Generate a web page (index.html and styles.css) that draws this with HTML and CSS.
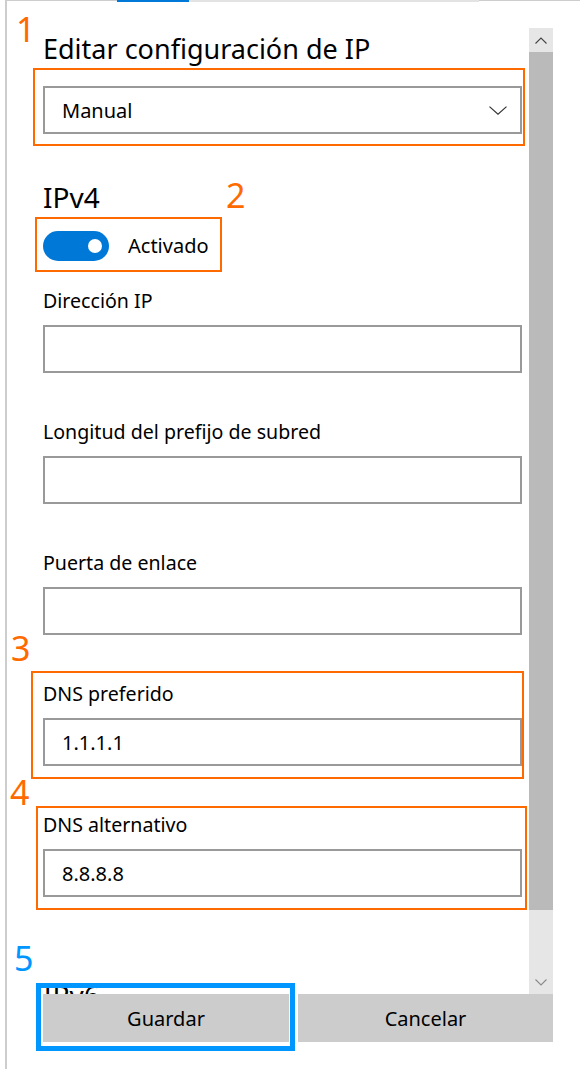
FILE: index.html
```html
<!DOCTYPE html>
<html lang="es">
<head>
<meta charset="utf-8">
<title>Editar configuración de IP</title>
<link rel="stylesheet" href="styles.css">
</head>
<body>
<div class="page">
  <div class="frame">
    <div class="tabs">
      <span class="seg seg-a"></span>
      <span class="seg seg-active"></span>
      <span class="seg seg-light"></span>
      <span class="seg seg-b"></span>
    </div>
    <div class="main">
      <div class="content">
        <h1 class="title">Editar configuración de IP</h1>
        <div class="select">
          <span>Manual</span>
          <svg class="chev" width="18" height="9" viewBox="0 0 18 9"><polyline points="0.5,0.6 9,8.2 17.5,0.6" fill="none" stroke="#333" stroke-width="1.2"/></svg>
        </div>
        <h2 class="section">IPv4</h2>
        <div class="toggle-row">
          <span class="toggle"><span class="knob"></span></span>
          <span class="toggle-label">Activado</span>
        </div>
        <div class="field first">
          <div class="label">Dirección IP</div>
          <div class="input"></div>
        </div>
        <div class="field">
          <div class="label">Longitud del prefijo de subred</div>
          <div class="input"></div>
        </div>
        <div class="field">
          <div class="label">Puerta de enlace</div>
          <div class="input"></div>
        </div>
        <div class="field">
          <div class="label">DNS preferido</div>
          <div class="input">1.1.1.1</div>
        </div>
        <div class="field">
          <div class="label">DNS alternativo</div>
          <div class="input">8.8.8.8</div>
        </div>
        <h2 class="section ipv6">IPv6</h2>
      </div>
      <div class="scrollbar">
        <div class="sb-btn">
          <svg width="12" height="7" viewBox="0 0 12 7"><polyline points="0.5,6.5 6,1 11.5,6.5" fill="none" stroke="#444" stroke-width="1.1"/></svg>
        </div>
        <div class="sb-thumb"></div>
        <div class="sb-track">
          <div class="sb-btn">
            <svg width="12" height="7" viewBox="0 0 12 7"><polyline points="0.5,0.5 6,6 11.5,0.5" fill="none" stroke="#8a8a8a" stroke-width="1.1"/></svg>
          </div>
        </div>
      </div>
    </div>
    <div class="actions">
      <button class="btn btn-save">Guardar</button>
      <button class="btn btn-cancel">Cancelar</button>
    </div>
  </div>

  <div class="ann-box box1"></div>
  <div class="ann-box box2"></div>
  <div class="ann-box box3"></div>
  <div class="ann-box box4"></div>
  <div class="focus-box"></div>

  <span class="ann-num n1">1</span>
  <span class="ann-num n2">2</span>
  <span class="ann-num n3">3</span>
  <span class="ann-num n4">4</span>
  <span class="ann-num n5">5</span>
</div>
</body>
</html>
```

FILE: styles.css
```css
* { box-sizing: border-box; }

body {
  margin: 0;
  background: #fff;
  color: #000;
  font-family: "Noto Sans", "Open Sans", sans-serif;
}

.page {
  position: relative;
  width: 580px;
  height: 1069px;
  overflow: hidden;
}

.frame {
  margin-left: 5px;
  height: 1069px;
  border-left: 2px solid #cdcdcd;
}

.tabs {
  display: flex;
  align-items: flex-start;
  height: 2px;
}
.seg { display: block; }
.seg-a { width: 110px; height: 1px; background: #cdcdcd; }
.seg-active { width: 72px; height: 2px; background: #0078d7; }
.seg-light { width: 290px; height: 2px; background: #e3e3e3; }
.seg-b { flex: 1; height: 1px; background: #cdcdcd; }

.main {
  display: flex;
  margin-top: 26px;
  height: 966px;
  padding-right: 27px;
}

.content {
  flex: 1;
  overflow: hidden;
  padding: 3px 7px 0 36px;
}

.title {
  margin: 0;
  font-size: 27px;
  font-weight: 400;
  line-height: 36px;
  white-space: nowrap;
}

.select {
  margin-top: 19px;
  height: 48px;
  border: 2px solid #999;
  display: flex;
  align-items: center;
  justify-content: space-between;
  padding: 0 13px 0 17px;
  font-size: 20px;
}
.chev { display: block; }

.section {
  margin: 45px 0 0;
  font-size: 28px;
  font-weight: 400;
  line-height: 36px;
}

.toggle-row {
  margin-top: 16px;
  height: 30px;
  display: flex;
  align-items: center;
  gap: 19px;
}
.toggle {
  width: 66px;
  height: 30px;
  border-radius: 15px;
  background: #0078d7;
  display: flex;
  align-items: center;
  justify-content: flex-end;
  padding-right: 7px;
}
.knob {
  width: 14px;
  height: 14px;
  border-radius: 50%;
  background: #fff;
}
.toggle-label { font-size: 20px; line-height: 28px; }

.field { margin-top: 44.5px; }
.field.first { margin-top: 25.5px; }

.label {
  font-size: 19.6px;
  line-height: 28px;
  white-space: nowrap;
}

.input {
  margin-top: 10.5px;
  height: 48px;
  border: 2px solid #999;
  display: flex;
  align-items: center;
  padding-left: 17px;
  font-size: 20px;
}

.ipv6 { margin-top: 80px; }

.scrollbar {
  width: 24px;
  display: flex;
  flex-direction: column;
  background: #e6e6e6;
}
.sb-btn {
  height: 24px;
  display: flex;
  align-items: center;
  justify-content: center;
}
.sb-btn svg { display: block; }
.sb-thumb { height: 858px; background: #bababa; }
.sb-track {
  flex: 1;
  display: flex;
  flex-direction: column;
  justify-content: flex-end;
}

.actions {
  display: flex;
  gap: 9px;
  height: 48px;
  padding: 0 27px 0 36px;
}
.btn {
  border: 0;
  margin: 0;
  background: #cccccc;
  color: #000;
  font-family: "Noto Sans", "Open Sans", sans-serif;
  font-size: 20px;
  padding: 0;
}
.btn-save { width: 246px; }
.btn-cancel { flex: 1; }

.ann-box {
  position: absolute;
  border: 2px solid #ff6a00;
}
.box1 { left: 33px; top: 68px; width: 492px; height: 78px; }
.box2 { left: 35px; top: 217px; width: 187px; height: 55px; }
.box3 { left: 31px; top: 671px; width: 493px; height: 108px; }
.box4 { left: 36px; top: 806px; width: 491px; height: 104px; }

.focus-box {
  position: absolute;
  left: 36px;
  top: 983px;
  width: 259px;
  height: 68px;
  border: 5px solid #0096ff;
}

.ann-num {
  position: absolute;
  font-size: 34px;
  line-height: 34px;
  color: #ff6a00;
}
.n1 { left: 16px; top: 12px; }
.n2 { left: 226px; top: 178px; }
.n3 { left: 11px; top: 631px; }
.n4 { left: 10px; top: 775px; }
.n5 { left: 14px; top: 941px; color: #0096ff; }
```
